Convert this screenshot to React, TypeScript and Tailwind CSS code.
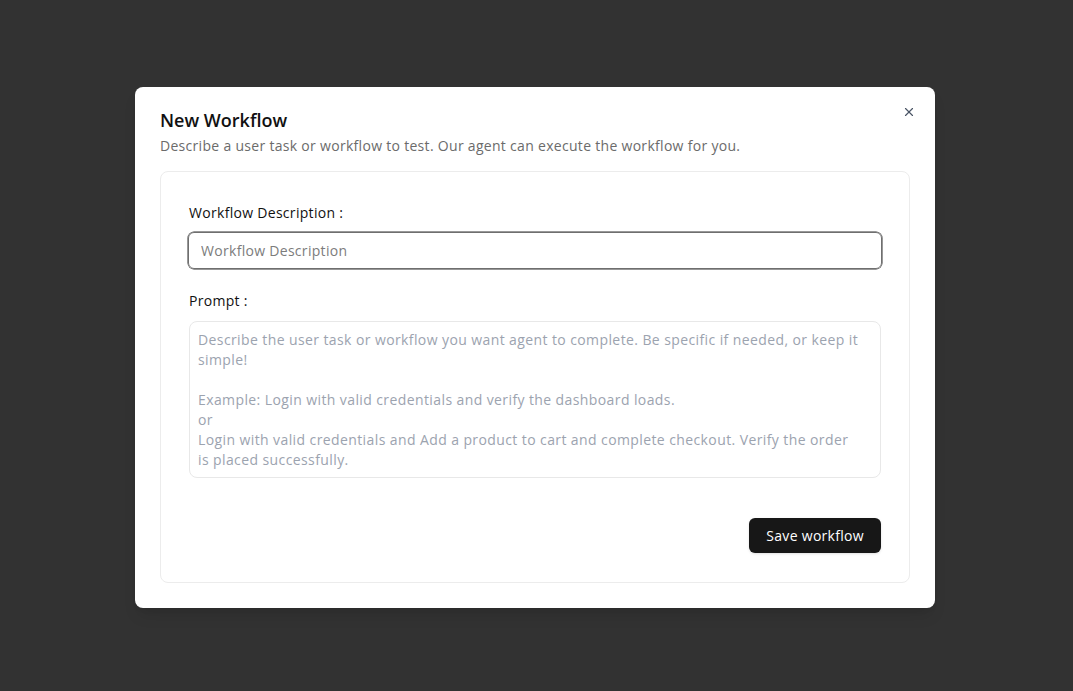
import React, { useState } from 'react';
import { X } from 'lucide-react';

const promptPlaceholder =
  'Describe the user task or workflow you want agent to complete. Be specific if needed, or keep it simple!\n\nExample: Login with valid credentials and verify the dashboard loads.\nor\nLogin with valid credentials and Add a product to cart and complete checkout. Verify the order is placed successfully.';

const App = () => {
  const [description, setDescription] = useState('');
  const [prompt, setPrompt] = useState('');

  return (
    <div
      className="min-h-screen w-full bg-[#323232] flex items-start justify-center pt-[87px]"
      style={{ fontFamily: '"Open Sans", "Noto Sans", sans-serif' }}
    >
      <div className="relative w-[800px] mr-[3px] bg-white rounded-lg shadow-lg px-[25px] pt-[21px] pb-[25px] tracking-[0.3px]">
        <button className="absolute top-[18px] right-[19px] text-gray-600 hover:text-gray-900">
          <X className="h-[14px] w-[14px]" strokeWidth={2} />
        </button>

        <h2 className="text-[18px] font-semibold text-[#111] leading-6 tracking-[0px]">New Workflow</h2>
        <p className="text-[14px] text-[#6b6b6b] mt-[4px] leading-5">
          Describe a user task or workflow to test. Our agent can execute the workflow for you.
        </p>

        <div className="mt-[15px] border border-[#ececec] rounded-lg px-[28px] pt-[31px] pb-[29px]">
          <label className="block text-[14px] font-medium text-[#111] leading-5">Workflow Description :</label>
          <input
            autoFocus
            value={description}
            onChange={(e) => setDescription(e.target.value)}
            placeholder="Workflow Description"
            className="mt-[9px] w-[calc(100%+2px)] h-[37px] -ml-[1px] rounded-md border border-[#6f6f6f] px-3 text-[14px] text-[#222] placeholder:text-[#7c7c7c] outline-none shadow-[0_0_0_0.5px_#333]"
          />

          <label className="block mt-[22px] text-[14px] font-medium text-[#111] leading-5">Prompt :</label>
          <textarea
            value={prompt}
            onChange={(e) => setPrompt(e.target.value)}
            placeholder={promptPlaceholder}
            className="mt-[10px] block w-full h-[157px] resize-none rounded-lg border border-[#e8e8e8] pl-2 pr-[19px] py-2 text-[14px] leading-5 tracking-[0.4px] text-[#222] placeholder:text-[#9ca3af] outline-none"
          />

          <div className="flex justify-end mt-[40px]">
            <button className="h-[35px] px-[17px] rounded-md bg-[#171717] text-white text-[14px] font-medium shadow-sm">
              Save workflow
            </button>
          </div>
        </div>
      </div>
    </div>
  );
};

export default App;
